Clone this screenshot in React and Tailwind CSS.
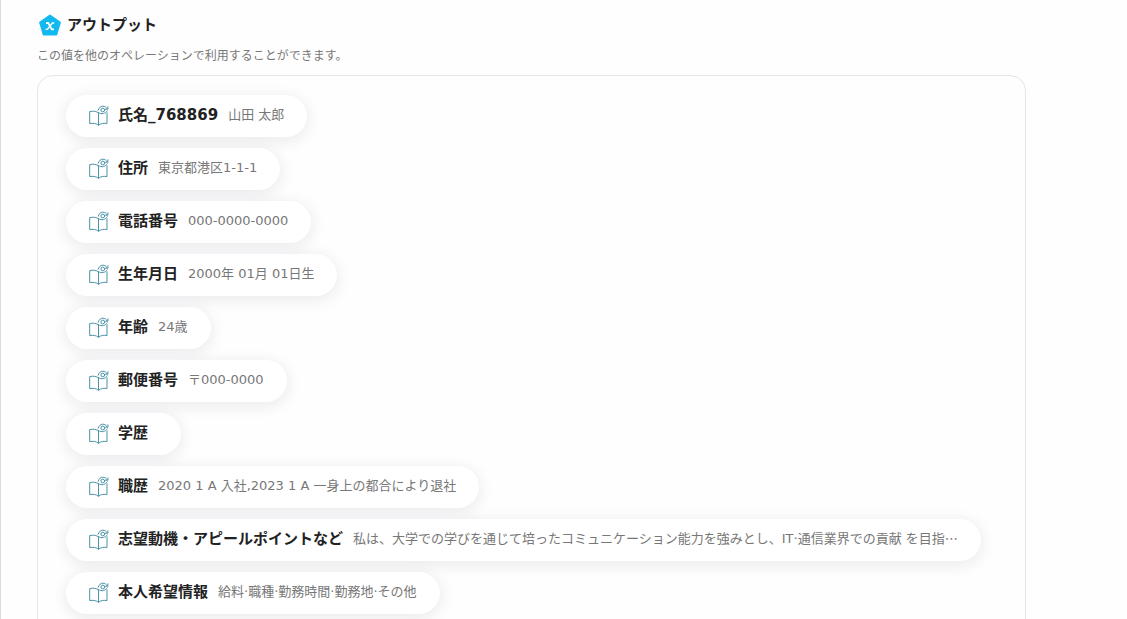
// App.jsx
const outputs = [
  { label: "氏名_768869", value: "山田 太郎" },
  { label: "住所", value: "東京都港区1-1-1" },
  { label: "電話番号", value: "000-0000-0000" },
  { label: "生年月日", value: "2000年 01月 01日生" },
  { label: "年齢", value: "24歳" },
  { label: "郵便番号", value: "〒000-0000" },
  { label: "学歴", value: "" },
  { label: "職歴", value: "2020 1 A 入社,2023 1 A 一身上の都合により退社" },
  {
    label: "志望動機・アピールポイントなど",
    value: "私は、大学での学びを通じて培ったコミュニケーション能力を強みとし、IT·通信業界での貢献 を目指⋯",
  },
  { label: "本人希望情報", value: "給料·職種·勤務時間·勤務地·その他" },
];

function OutputIcon() {
  return (
    <svg className="size-6 shrink-0" viewBox="0 0 24 24" aria-hidden="true">
      <path
        d="M12 2.4 L22 9.6 L18.4 21.6 H5.6 L2 9.6 Z"
        fill="#12b9ee"
        stroke="#12b9ee"
        strokeWidth="1.8"
        strokeLinejoin="round"
      />
      <path d="M8 10 H10.2 L13.8 16.4 H16" fill="none" stroke="#fff" strokeWidth="1.8" />
      <path d="M16.2 10 H14.4 L9.4 16.4 H7.6" fill="none" stroke="#fff" strokeWidth="1.4" />
    </svg>
  );
}

function BookIcon() {
  return (
    <svg
      className="size-5 shrink-0 overflow-visible"
      viewBox="0 0 20 20"
      fill="none"
      stroke="#4a93a8"
      strokeWidth="1"
      strokeLinecap="round"
      strokeLinejoin="round"
      aria-hidden="true"
    >
      <path d="M9.5 6.8 C7.5 5.2 4 4.8 .7 5.6 V17.6 C4 17 7 17.2 9.5 19.3 C12 17.2 15 17 18 17.6 V6.8" />
      <path d="M9.5 6.8 V19" />
      <path d="M9.2 4.2 C10 1.6 11.6 .2 13.8 .2 C15.8 .2 17.4 1.2 18.2 2.8" />
      <path d="M18.9 .8 V3.2 H16.6" />
      <path d="M9.7 6.8 C12.4 8.6 16.6 7.8 18.2 4.8" />
      <circle cx="13.8" cy="4" r="1.9" />
    </svg>
  );
}

function OutputItem({ label, value }) {
  return (
    <li className="flex h-[42px] max-w-full items-center rounded-full bg-white px-[23px] shadow-[0_3px_16px_rgba(40,30,60,0.10)]">
      <BookIcon />
      <span className="ml-[9px] shrink-0 pb-0.5 text-[15px] leading-5 font-bold text-[#222]">{label}</span>
      <span className="ml-[10px] truncate pb-0.5 text-[13px] leading-5 text-[#777]">{value}</span>
    </li>
  );
}

function App() {
  return (
    <main className="h-screen overflow-hidden border-l border-[#dcdcdc] bg-[#fefefe] pt-[13px] pr-[101px] pl-9 font-['DejaVu_Sans','Noto_Sans_CJK_JP',sans-serif]">
      <div className="flex items-center gap-[5px] pl-px">
        <OutputIcon />
        <h1 className="text-[15px] leading-6 font-bold text-[#222]">アウトプット</h1>
      </div>
      <p className="mt-[7px] text-xs leading-6 text-[#777]">
        この値を他のオペレーションで利用することができます。
      </p>

      <section className="mt-[7px] rounded-2xl border border-[#e6e6e8] pt-[19px] pr-[26px] pb-6 pl-7">
        <ul className="flex flex-col items-start gap-[11px]">
          {outputs.map((item) => (
            <OutputItem key={item.label} label={item.label} value={item.value} />
          ))}
        </ul>
      </section>
    </main>
  );
}

export default App;
